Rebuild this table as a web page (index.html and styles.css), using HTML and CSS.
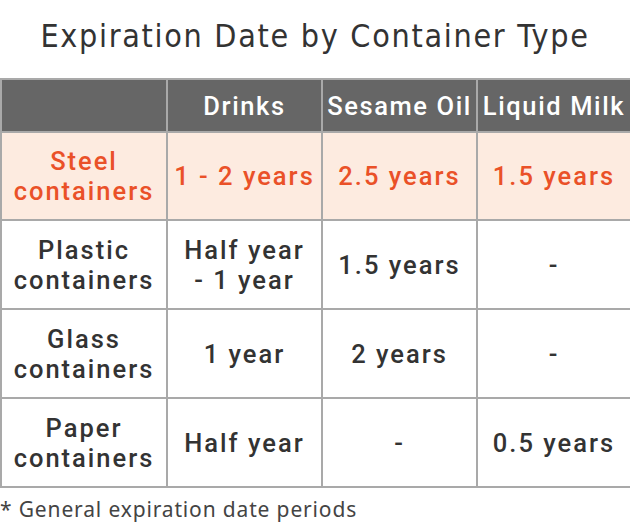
FILE: index.html
```html
<!DOCTYPE html>
<html lang="en">
<head>
<meta charset="utf-8">
<title>Expiration Date by Container Type</title>
<link rel="stylesheet" href="styles.css">
</head>
<body>
<div class="page">
  <h1 class="title">Expiration Date by Container Type</h1>
  <table class="grid">
    <colgroup>
      <col class="c-first">
      <col class="c-mid">
      <col class="c-mid">
      <col class="c-last">
    </colgroup>
    <thead>
      <tr class="head-row">
        <th></th>
        <th>Drinks</th>
        <th>Sesame Oil</th>
        <th>Liquid Milk</th>
      </tr>
    </thead>
    <tbody>
      <tr class="row highlight">
        <td><span class="ln">Steel</span><span class="ln">containers</span></td>
        <td>1 - 2 years</td>
        <td>2.5 years</td>
        <td>1.5 years</td>
      </tr>
      <tr class="row">
        <td><span class="ln">Plastic</span><span class="ln">containers</span></td>
        <td><span class="ln">Half year</span><span class="ln">- 1 year</span></td>
        <td>1.5 years</td>
        <td>-</td>
      </tr>
      <tr class="row">
        <td><span class="ln">Glass</span><span class="ln">containers</span></td>
        <td>1 year</td>
        <td>2 years</td>
        <td>-</td>
      </tr>
      <tr class="row">
        <td><span class="ln">Paper</span><span class="ln">containers</span></td>
        <td>Half year</td>
        <td>-</td>
        <td>0.5 years</td>
      </tr>
    </tbody>
  </table>
  <p class="note">* General expiration date periods</p>
</div>
</body>
</html>
```

FILE: styles.css
```css
html, body {
  margin: 0;
  padding: 0;
  background: #ffffff;
}

.page {
  width: 630px;
  font-family: "Noto Sans", "Open Sans", sans-serif;
  color: #333333;
}

.title {
  margin: 0;
  height: 78px;
  display: flex;
  align-items: center;
  justify-content: center;
  padding-bottom: 6px;
  box-sizing: border-box;
  font-family: "DejaVu Sans Condensed", "DejaVu Sans", sans-serif;
  font-stretch: condensed;
  font-weight: 400;
  font-size: 32px;
  letter-spacing: 1.7px;
  color: #333333;
}

.grid {
  border-collapse: collapse;
  width: 630px;
  table-layout: fixed;
}

.c-first { width: 166px; }
.c-mid { width: 155px; }
.c-last { width: 154px; }

.grid th,
.grid td {
  border: 2px solid #a9a9a9;
  text-align: center;
  vertical-align: middle;
  padding: 0;
  font-family: Roboto, "Noto Sans", sans-serif;
  font-size: 25.5px;
  font-weight: 500;
  line-height: 30px;
  letter-spacing: 2px;
  white-space: nowrap;
}

.ln {
  display: block;
  height: 30px;
  line-height: 30px;
}

.head-row th {
  height: 51px;
  background: #666666;
  color: #ffffff;
  font-weight: 500;
  letter-spacing: 1.6px;
}

.row td {
  height: 87px;
  color: #333333;
}

.row.highlight td {
  height: 86px;
  background: #fdebe0;
  color: #ea5128;
}

.note {
  margin: 8px 0 0 0;
  font-size: 21px;
  line-height: 26px;
  font-weight: 400;
  color: #444444;
  letter-spacing: 0.85px;
}
```
